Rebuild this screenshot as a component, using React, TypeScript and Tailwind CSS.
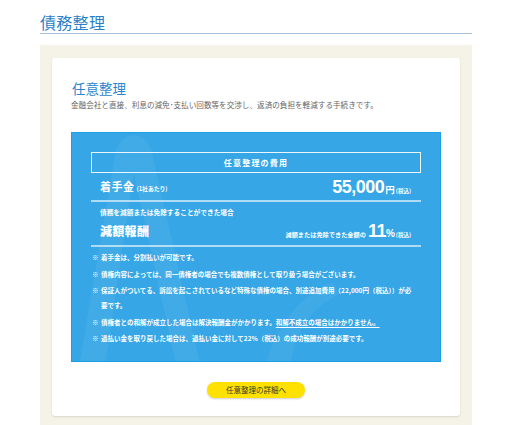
import React from 'react'

const notes: React.ReactNode[] = [
    '着手金は、分割払いが可能です。',
    '債権内容によっては、同一債権者の場合でも複数債権として取り扱う場合がございます。',
    '保証人がついてる、訴訟を起こされているなど特殊な債権の場合、別途追加費用（22,000円（税込））が必要です。',
    <>
        債権者との和解が成立した場合は解決報酬金がかかります。<span className="underline underline-offset-2">和解不成立の場合はかかりません。</span>
    </>,
    '過払い金を取り戻した場合は、過払い金に対して22%（税込）の成功報酬が別途必要です。',
]

function Watermark() {
    return (
        <svg className="absolute inset-0 w-full h-full pointer-events-none" viewBox="0 0 370 229" preserveAspectRatio="none">
            <path d="M8 229 L44 18 Q50 2 62 2 Q74 2 80 18 L128 229 L104 229 L62 40 L34 229 Z" fill="#ffffff" fillOpacity="0.06" />
            <path d="M196 229 Q214 170 262 150 L268 162 Q228 182 220 229 Z" fill="#ffffff" fillOpacity="0.05" />
        </svg>
    )
}

export default function App() {
    return (
        <div className="w-[512px] h-[425px] bg-white overflow-hidden font-['Noto_Sans_CJK_JP',sans-serif]">
            <div className="mx-10 pt-[12px]">
                <h1 className="text-[16px] leading-[20px] tracking-[0.3px] text-[#2b7fc6] pb-[1px] border-b border-[#a5bfe0]">債務整理</h1>
            </div>

            <div className="mx-10 mt-[11px] bg-[#f5f3e7] px-3 pt-[13px] pb-[10px]">
                <div className="bg-white rounded-[3px] shadow-[0_1px_2px_rgba(0,0,0,0.12)] px-[19px] pt-[20px] pb-[18px]">
                    <h2 className="text-[13.5px] leading-[20px] text-[#2b85cc] pl-[1px]">任意整理</h2>
                    <p className="mt-[2px] text-[7.6px] leading-[10px] text-[#666666]">
                        金融会社と直接、利息の減免･支払い回数等を交渉し、返済の負担を軽減する手続きです。
                    </p>

                    <div className="relative mt-[22px] bg-[#36a6e6] border border-[#1c9fe6] px-[19px] pt-[19px] pb-[15px] text-white overflow-hidden">
                        <Watermark />
                        <div className="relative">
                            <div className="h-[21px] border border-white/90 flex items-center justify-center text-[8px] font-bold tracking-[1.2px]">
                                任意整理の費用
                            </div>

                            <div className="h-[27px] flex items-center justify-between pl-[9px] pr-[10px]">
                                <div className="flex items-baseline font-bold">
                                    <span className="text-[11px] tracking-[0.5px]">着手金</span>
                                    <span className="text-[5.8px] ml-[2px]">(1社あたり)</span>
                                </div>
                                <div className="flex items-baseline font-bold">
                                    <span className="font-['Liberation_Sans',sans-serif] text-[18px] leading-[20px] tracking-[-0.5px]">55,000</span>
                                    <span className="text-[9.5px] ml-[1px]">円</span>
                                    <span className="text-[5.5px] ml-[1px]">(税込)</span>
                                </div>
                            </div>
                            <div className="h-[2px] bg-white/60" />

                            <div className="pt-[5px] pl-[9px] pr-[10px]">
                                <p className="text-[6.7px] leading-[10px] font-bold">債務を減額または免除することができた場合</p>
                                <div className="h-[28px] flex items-center justify-between">
                                    <span className="text-[12px] font-black tracking-[0.3px]">減額報酬</span>
                                    <div className="flex items-baseline font-bold">
                                        <span className="text-[6.2px]">減額または免除できた金額の</span>
                                        <span className="font-['Liberation_Sans',sans-serif] text-[18px] leading-[20px] ml-[2px] tracking-[-0.5px]">11</span>
                                        <span className="font-['Liberation_Sans',sans-serif] text-[10px]">%</span>
                                        <span className="text-[5.5px] ml-[1px]">(税込)</span>
                                    </div>
                                </div>
                            </div>
                            <div className="h-[2px] bg-white/60" />

                            <ul className="pt-[3px] pr-[4px] flex flex-col gap-[1.5px]">
                                {notes.map((n, i) => (
                                    <li key={i} className="flex text-[6.5px] leading-[15px] font-bold">
                                        <span className="w-[10px] shrink-0 pl-[1px]">※</span>
                                        <span>{n}</span>
                                    </li>
                                ))}
                            </ul>
                        </div>
                    </div>

                    <div className="mt-[20px] flex justify-center">
                        <a className="w-[98px] h-[16px] rounded-full bg-[#ffe100] shadow-[0_1px_2px_rgba(0,0,0,0.2)] flex items-center justify-center text-[7.5px] text-[#333333]">
                            任意整理の詳細へ
                        </a>
                    </div>
                </div>
            </div>
        </div>
    )
}
